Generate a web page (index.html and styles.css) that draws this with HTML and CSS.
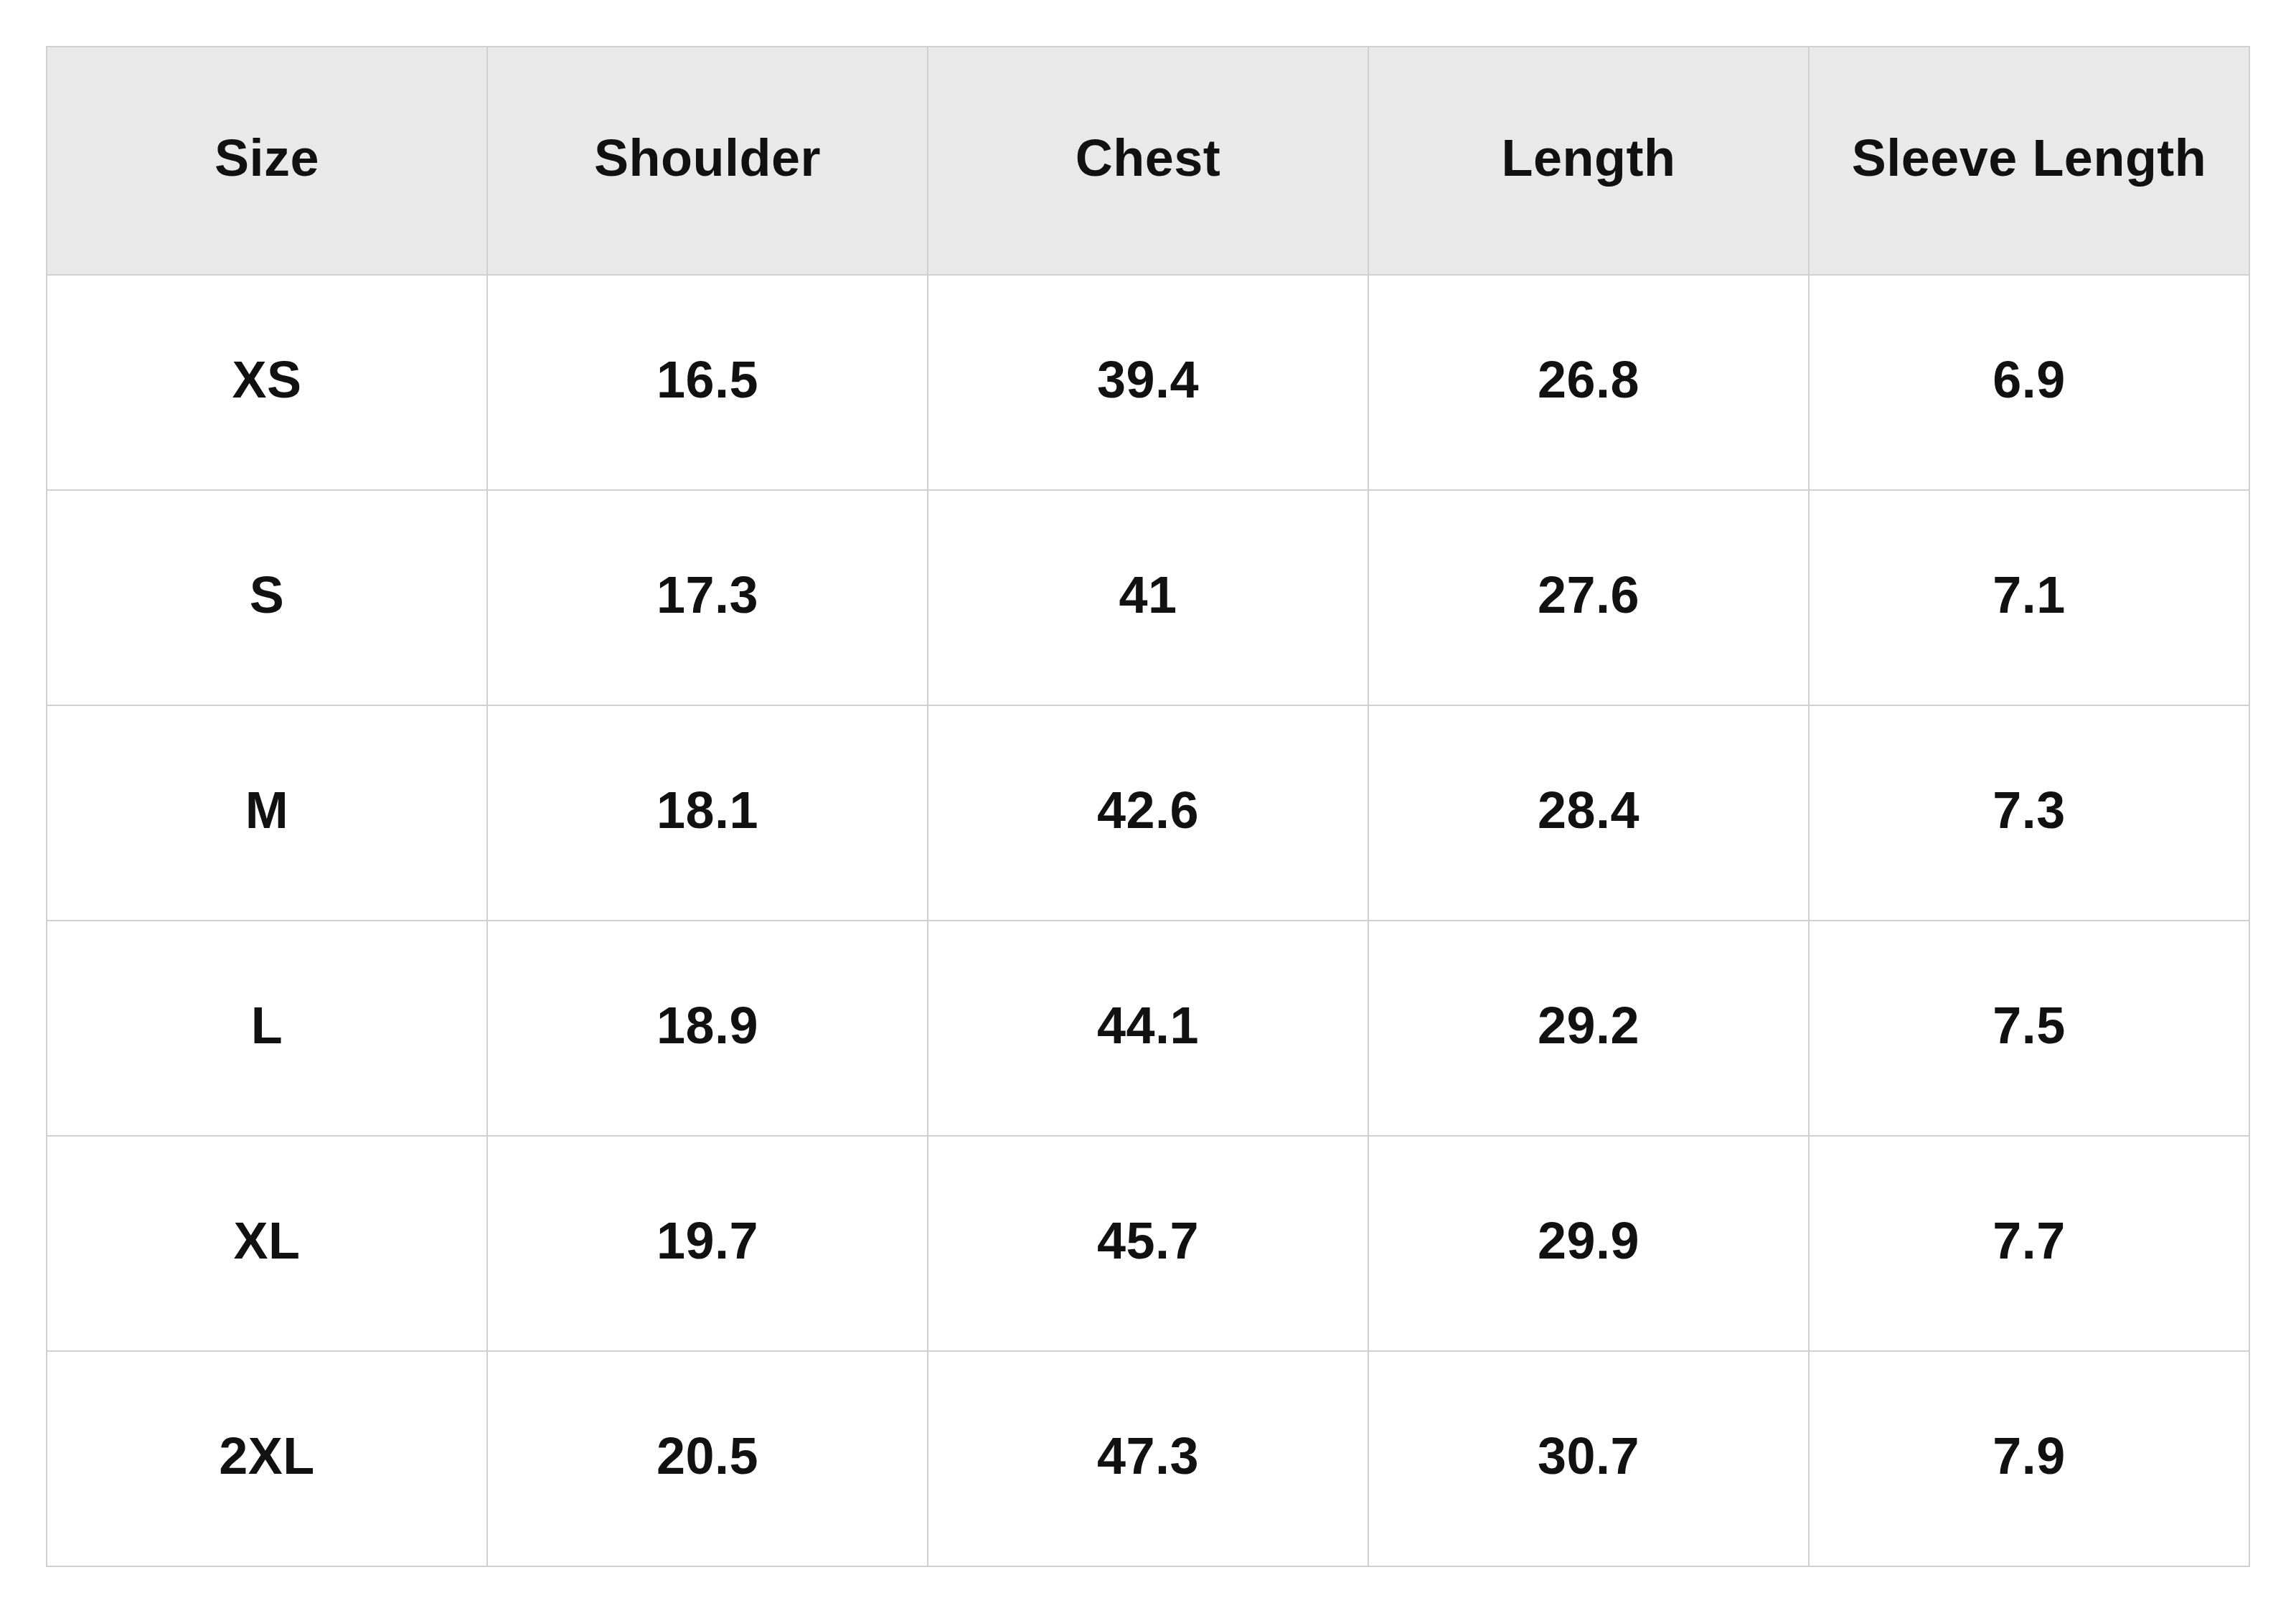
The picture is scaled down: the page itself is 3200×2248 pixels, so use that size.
FILE: index.html
```html
<!DOCTYPE html>
<html lang="en">
<head>
<meta charset="utf-8">
<title>Size Chart</title>
<link rel="stylesheet" href="styles.css">
</head>
<body>
<table class="size-table">
  <thead>
    <tr class="head-row">
      <th>Size</th>
      <th>Shoulder</th>
      <th>Chest</th>
      <th>Length</th>
      <th>Sleeve Length</th>
    </tr>
  </thead>
  <tbody>
    <tr class="body-row"><td>XS</td><td>16.5</td><td>39.4</td><td>26.8</td><td>6.9</td></tr>
    <tr class="body-row"><td>S</td><td>17.3</td><td>41</td><td>27.6</td><td>7.1</td></tr>
    <tr class="body-row"><td>M</td><td>18.1</td><td>42.6</td><td>28.4</td><td>7.3</td></tr>
    <tr class="body-row"><td>L</td><td>18.9</td><td>44.1</td><td>29.2</td><td>7.5</td></tr>
    <tr class="body-row"><td>XL</td><td>19.7</td><td>45.7</td><td>29.9</td><td>7.7</td></tr>
    <tr class="body-row"><td>2XL</td><td>20.5</td><td>47.3</td><td>30.7</td><td>7.9</td></tr>
  </tbody>
</table>
</body>
</html>
```

FILE: styles.css
```css
html, body {
  margin: 0;
  padding: 0;
  background: #ffffff;
}

body {
  padding: 64px;
  font-family: "Liberation Sans", Arial, sans-serif;
  color: #111111;
}

.size-table {
  width: 3072px;
  border-collapse: collapse;
  table-layout: fixed;
}

.size-table th,
.size-table td {
  border: 2px solid #d0d0d0;
  text-align: center;
  vertical-align: middle;
  font-size: 72px;
  font-weight: 700;
  padding: 0 0 8px;
  letter-spacing: 0.5px;
}

.head-row th {
  background: #e9e9e9;
  height: 308px;
}

.body-row td {
  height: 290px;
}
```
